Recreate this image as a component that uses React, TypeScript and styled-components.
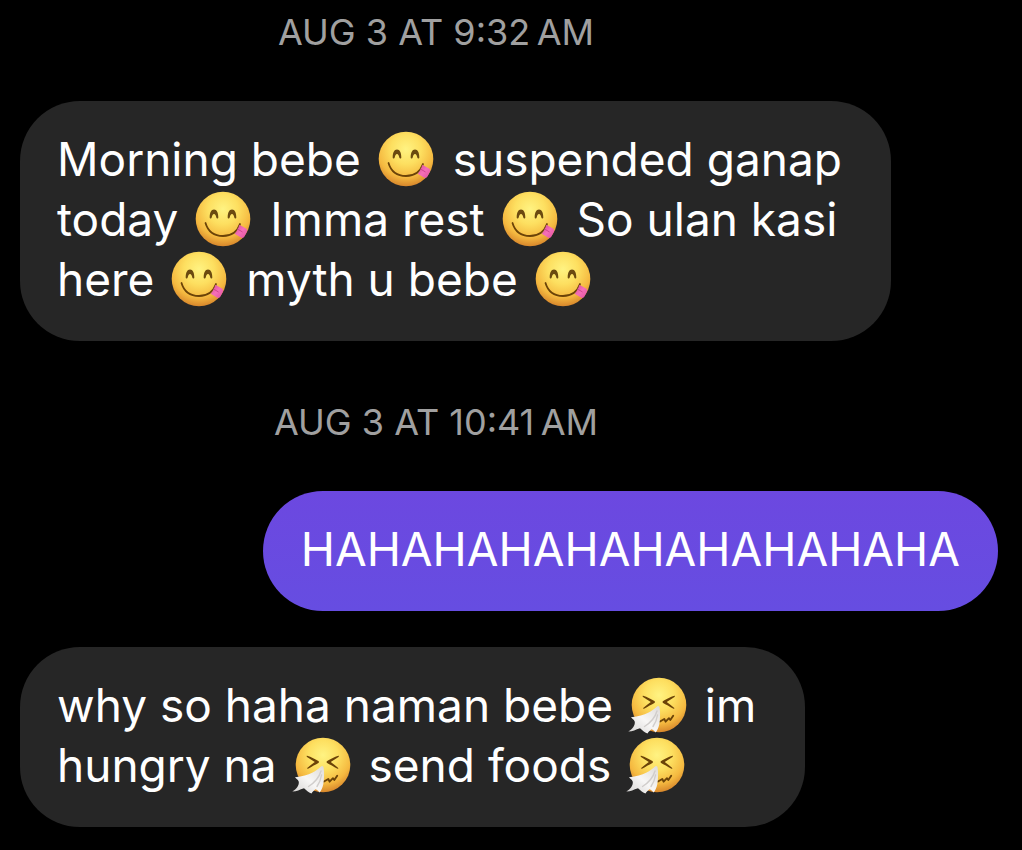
import React from "react";
import styled, { createGlobalStyle } from "styled-components";

const GlobalStyle = createGlobalStyle`
  body {
    margin: 0;
    background: #000;
    color: #fff;
    font-family: Inter, "Noto Sans", sans-serif;
  }
`;

const Thread = styled.main`
  display: flex;
  flex-direction: column;
  padding: 8px 24px 24px 20px;
`;

const Stamp = styled.time`
  display: block;
  padding-right: 146px;
  margin: 0 0 45px;
  color: #a0a0a0;
  font-size: 36px;
  line-height: 48px;
  text-align: center;
`;

const Bubble = styled.p<{ $mine?: boolean; $gap: number }>`
  align-self: ${({ $mine }) => ($mine ? "flex-end" : "flex-start")};
  margin: 0 0 ${({ $gap }) => $gap}px;
  padding: 28px ${({ $mine }) => ($mine ? 38 : 36)}px 32px
    ${({ $mine }) => ($mine ? 38 : 37)}px;
  border-radius: 60px;
  background: ${({ $mine }) =>
    $mine ? "linear-gradient(#6c48e0, #664de1)" : "#262626"};
  color: #fff;
  font-size: 46px;
  line-height: 60px;
  white-space: pre;
`;

const Emoji = styled.svg`
  width: 58px;
  height: 58px;
  margin: 0 5px 0 3px;
  overflow: visible;
  vertical-align: -12px;
`;

const Defs = styled.svg`
  display: block;
  width: 0;
  height: 0;
`;

const FaceGradients = () => (
  <Defs aria-hidden="true">
    <defs>
      <radialGradient id="face" cx="50%" cy="32%" r="69%">
        <stop offset="0" stopColor="#fff382" />
        <stop offset="0.4" stopColor="#fddf60" />
        <stop offset="0.75" stopColor="#f5b940" />
        <stop offset="1" stopColor="#d5832a" />
      </radialGradient>
      <linearGradient id="tongue" x1="0" y1="0" x2="1" y2="1">
        <stop offset="0" stopColor="#d64a94" />
        <stop offset="0.5" stopColor="#f56fb8" />
        <stop offset="1" stopColor="#e04f9f" />
      </linearGradient>
      <linearGradient id="tissue" x1="1" y1="0" x2="0" y2="1">
        <stop offset="0" stopColor="#dedbd8" />
        <stop offset="0.5" stopColor="#f8f7f6" />
        <stop offset="1" stopColor="#d3d1d0" />
      </linearGradient>
    </defs>
  </Defs>
);

const Yum = () => (
  <Emoji viewBox="0 0 58 58" role="img" aria-label="Face savoring food">
    <circle cx="29" cy="29" r="27.3" fill="url(#face)" />
    <path
      d="M15.700 27.500C15.700 22.500 17.200 19.500 20 19.500s4.300 3 4.300 8c0 1.200-1.700 1.300-2 .1-.5-2.300-1.100-3.600-2.300-3.600s-1.800 1.300-2.300 3.600c-.3 1.200-2 1.100-2-.1zM33.700 27.500C33.700 22.500 35.200 19.500 38 19.500s4.300 3 4.300 8c0 1.200-1.700 1.300-2 .1-.5-2.300-1.100-3.600-2.300-3.600s-1.800 1.300-2.300 3.600c-.3 1.200-2 1.100-2-.1z"
      fill="#6b4a10"
    />
    <path
      d="M11.500 33C14 41.500 20.500 46 29 46c8 0 14.200-4 17-12"
      fill="none"
      stroke="#6b4308"
      strokeWidth="1.800"
      strokeLinecap="round"
    />
    <path
      d="M45.300 34.700l6.700 3.800c1.300.8 1.500 2 .9 3.200l-2.300 4.500c-.8 1.600-2.200 2.100-3.700 1.400l-6.200-3.800c2-2.400 3.600-5.300 4.600-9.100z"
      fill="url(#tongue)"
    />
    <path
      d="M43.800 39.200l4.400 2.600"
      stroke="#cf458f"
      strokeWidth="1"
      strokeLinecap="round"
    />
  </Emoji>
);

const Sneeze = () => (
  <Emoji viewBox="0 0 58 58" role="img" aria-label="Sneezing face">
    <circle cx="30" cy="29" r="27.3" fill="url(#face)" />
    <path
      d="M14.200 19.800C18 21 22.500 23.200 25.800 25.200v1.500C22.500 28.500 19 30.500 15 32.800c-.8.200-1.100-.6-.5-1.100 2.500-2.100 4.800-4 7.300-5.700-2.700-1.700-5.200-3.300-7.800-5.100-.6-.5-.5-1.200.2-1.100zM45.300 19.800C41.500 21 37 23.200 33.700 25.200v1.500c3.300 1.800 6.800 3.800 10.800 6.100.8.200 1.100-.6.500-1.100-2.500-2.100-4.800-4-7.300-5.700 2.700-1.700 5.200-3.300 7.800-5.100.6-.5.5-1.200-.2-1.100z"
      fill="#6b4308"
    />
    <path
      d="M31 45.500l4.300-2.500 1.300 2.700 3.400-3.500 1.300 1.800 2.900-4.200"
      fill="none"
      stroke="#6b4308"
      strokeWidth="1.900"
      strokeLinecap="round"
      strokeLinejoin="round"
    />
    <path
      d="M28 30.500C24 34.500 17 39.500 2 41.300c.4 1.200 3 2 3.700 4.200.8 3.500-2.200 7.500-6.400 10 4.700-.2 7.200-1.800 11.700-3.300 2.500 2.100 4.200 4.300 7.500 5.300 1-1.600 2.300-3.100 4-4.200 1.600.6 2.800 1.800 4.200 3.300 1.800-2.200 2.800-5 3.600-8.300.8-5.300 1.200-11.300.3-16.500-.2-1.600-1.400-2.500-2.600-1.300z"
      fill="url(#tissue)"
    />
    <path
      d="M28 35c-2 7-7 12-12.500 15.500M28.500 39c-.7 5-2.300 8.500-4.500 11.500"
      fill="none"
      stroke="#d0cdcb"
      strokeWidth="1.400"
      strokeLinecap="round"
    />
  </Emoji>
);

export default function App() {
  return (
    <>
      <GlobalStyle />
      <FaceGradients />
      <Thread>
        <Stamp>AUG 3 AT 9:32{"\u202f"}AM</Stamp>
        <Bubble $gap={57}>
          Morning bebe <Yum /> suspended ganap {"\n"}
          today <Yum /> Imma rest <Yum /> So ulan kasi {"\n"}
          here <Yum /> myth u bebe <Yum />
        </Bubble>
        <Stamp>AUG 3 AT 10:41{"\u202f"}AM</Stamp>
        <Bubble $mine $gap={36}>
          HAHAHAHAHAHAHAHAHAHA
        </Bubble>
        <Bubble $gap={0}>
          why so haha naman bebe <Sneeze /> im {"\n"}
          hungry na <Sneeze /> send foods <Sneeze />
        </Bubble>
      </Thread>
    </>
  );
}
